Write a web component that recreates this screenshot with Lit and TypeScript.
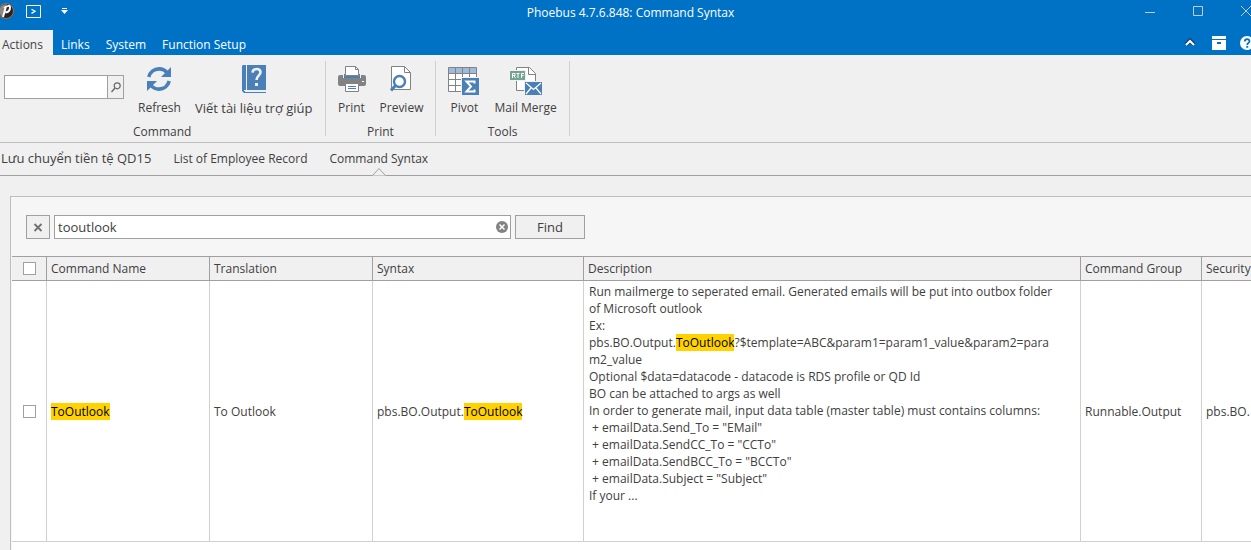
import { LitElement, html, css, svg } from "lit";
import { customElement, property, state } from "lit/decorators.js";

const icons: Record<string, unknown> = {
  refresh: svg`<svg width="24" height="24" viewBox="0 0 24 24">
    <g fill="none" stroke="#4a7fb8" stroke-width="3.6"><path d="M1.8 10C3 5 7 1.9 12 1.9c3.600 0 6.500 1.600 8.400 4.100"/><path d="M22.200 14C21 19 17 22.100 12 22.100c-3.600 0-6.500-1.600-8.400-4.100"/></g>
    <path d="M24 0v10H14zM0 24V14h10z" fill="#4a7fb8"/></svg>`,
  book: svg`<svg width="24" height="28" viewBox="0 0 24 28">
    <path d="M1 0h3v25H0V1zM5 0h19v25H5z" fill="#4a7fb8"/><path d="M0 24h2v2h22v2H2l-2-2z" fill="#4a7fb8"/><path d="M3 25h21v2H3z" fill="#f0f0f0"/>
    <path d="M10.500 7.700c.3-2.600 1.900-3.700 4.100-3.700 2.300 0 3.900 1.200 3.900 3.300 0 3.500-4 3.200-4 7.700" fill="none" stroke="#f0f0f0" stroke-width="2.600"/><path d="M13 18h3v3h-3z" fill="#f0f0f0"/></svg>`,
  print: svg`<svg width="28" height="26" viewBox="0 0 28 26">
    <path d="M0 11q0-2 2-2h3v3h18V9h3q2 0 2 2v7q0 2-2 2H2q-2 0-2-2z" fill="#828282"/><path d="M7.500 9.500v-9h10l3 3v6z" fill="#fff" stroke="#828282"/><path d="M17.500.5v3h3" fill="none" stroke="#828282"/><path d="M6 8h1v2h14V8h1v4H6z" fill="#4a7fb8"/>
    <path d="M7.500 17.500h13v8h-13z" fill="#fff" stroke="#828282"/><path d="M10 20.500h8m-8 2h8" stroke="#4a7fb8"/><path d="M24 15.500h2" stroke="#fff"/></svg>`,
  preview: svg`<svg width="22" height="26" viewBox="0 0 22 26">
    <path d="M1.500.5h13l6 6v17h-19z" fill="#fff" stroke="#828282"/><path d="M14.500.5v6h6" fill="none" stroke="#828282"/>
    <circle cx="9.500" cy="15.500" r="5.500" fill="#fff" stroke="#4a7fb8" stroke-width="2.400"/><path d="M5.500 19.500L1 24.500" stroke="#4a7fb8" stroke-width="3"/></svg>`,
  pivot: svg`<svg width="32" height="31" viewBox="0 -3 32 31">
    <path d="M.5.500h28v24H.5z" fill="#fff"/><path d="M.5.500h28v6H.5z" fill="#9dbbdc"/>
    <path d="M.5.500h28v24H.5zM.5 6.500h28M.5 12.500h28M.5 18.500h28M7.500.5v24M14.500.5v24M21.500.5v24" fill="none" stroke="#828282"/>
    <path d="M13 10h19v18H13z" fill="#f0f0f0"/><path d="M14 11h17v17H14z" fill="#4a7fb8"/><path d="M26.500 16.500v-2h-8l4.500 5-4.500 5h8v-2" fill="none" stroke="#fff" stroke-width="2"/></svg>`,
  mail: svg`<svg width="32" height="31" viewBox="0 -3 32 31">
    <path d="M6.500.500h13l6 6v17h-19z" fill="#fff" stroke="#828282"/><path d="M18.500.5v7h7" fill="none" stroke="#828282"/>
    <path d="M0 3h16v11H0z" fill="#f0f0f0"/><path d="M0 4h15v9H0z" fill="#74a492"/>
    <path d="M2.500 11V6.500H5v2H3m1 0L5.500 11M6.500 6.500h3M8 6.500V11M11.500 11V6.500h2.500M11.500 8.500h2" fill="none" stroke="#fff"/>
    <path d="M14 14h18v14H14z" fill="#f0f0f0"/><path d="M15 15h17v13H15z" fill="#4a7fb8"/><path d="M16 16l7.500 6.500L31 16M16 27l5-6M31 27l-5-6" fill="none" stroke="#fff" stroke-width="1.200"/></svg>`,
};

@customElement("ribbon-button")
class RibbonButton extends LitElement {
  @property() icon = "";
  @property() label = "";
  @property({ type: Boolean }) large = false;

  static styles = css`
    :host { display: block; }
    .button { display: flex; flex-direction: column; align-items: center; gap: 3px; border: 0; padding: 0; background: none; color: #404040; font: 12px/20px "Open Sans", sans-serif; white-space: nowrap; }
    .picture { display: flex; align-items: center; height: 32px; }
    .large { font-size: 13px; }
  `;

  render() {
    return html`<button class="button ${this.large ? "large" : ""}"><span class="picture">${icons[this.icon]}</span>${this.label}</button>`;
  }
}

@customElement("app-root")
class AppRoot extends LitElement {
  @state() query = "tooutlook";

  static styles = css`
    :host { display: flex; flex-direction: column; min-height: 100vh; overflow: hidden; background: #f0f0f0; color: #404040; font: 12px/17px "Open Sans", sans-serif; }
    *, *::before { box-sizing: border-box; }
    svg { display: block; flex: none; }
    button, input { font: inherit; color: inherit; border-radius: 0; margin: 0; }
    a { color: inherit; text-decoration: none; }
    .plain { border: 0; background: none; padding: 0; }

    .titlebar { display: grid; grid-template-columns: 1fr auto 1fr; align-items: center; height: 30px; overflow: hidden; background: #0072c6; color: #fff; }
    .quick { display: flex; align-items: center; padding-bottom: 8px; }
    .quick .logo { margin-left: -2px; }
    .quick .run { margin-left: 12px; }
    .quick .more { margin-left: 20px; }
    .title { margin: 0; padding: 0 0 5px 10px; font-size: 12px; font-weight: 400; }
    .window { display: flex; justify-content: flex-end; gap: 38px; padding-bottom: 8px; }
    .menubar { display: flex; height: 25px; background: #0072c6; color: #fff; overflow: hidden; }
    .tab { padding: 6px 8px 0; height: 25px; }
    .tab.active { background: #f0f0f0; color: #444; padding: 6px 10px 0 2px; }
    .tools { display: flex; align-items: center; gap: 14px; margin: 0 -4px 0 auto; }

    .ribbon { display: flex; height: 88px; padding: 6px 0; border-bottom: 1px solid #bebebe; }
    .group { display: flex; flex-direction: column; align-items: center; border-right: 1px solid #d0d0d0; }
    .items { display: flex; flex: none; align-items: flex-start; gap: 14px; padding: 2px 12px 0; height: 62px; }
    .first { padding-left: 4px; }
    .caption { flex: none; line-height: 17px; }
    .combo { display: flex; width: 120px; height: 24px; margin-top: 12px; border: 1px solid #a0a0a0; background: #fff; }
    .combo input { flex: 1; min-width: 0; border: 0; padding: 0 4px; outline: 0; background: #fff; }
    .combo button { display: flex; align-items: center; justify-content: center; width: 16px; border: 0; border-left: 1px solid #a0a0a0; padding: 0; background: #f0f0f0; }

    .docs { display: flex; gap: 22px; height: 33px; padding: 7px 1px 0; border-bottom: 1px solid #a0a0a0; white-space: nowrap; }
    .doc { position: relative; height: 26px; }
    .doc.big { font-size: 13px; }
    .notch { position: absolute; left: calc(50% - 7px); bottom: 0; }

    .panel { display: flex; flex-direction: column; flex: 1; margin: 20px 0 0 10px; border: 1px solid #bebebe; border-width: 1px 0 0 1px; background: #f6f6f6; }
    .search { display: flex; gap: 4px; padding: 18px 16px 17px 15px; font-size: 13px; }
    .box { display: flex; align-items: center; justify-content: center; height: 24px; border: 1px solid #a0a0a0; padding: 0; background: #f0f0f0; }
    .close { width: 24px; }
    .find { width: 70px; }
    .field { width: 457px; padding-right: 2px; background: #fff; }
    .field input { flex: 1; border: 0; padding: 0 3px; outline: 0; background: #fff; }

    .frame { flex: 1; margin-left: 1px; background: #fff; }
    .grid { width: 100%; table-layout: fixed; border-collapse: separate; border-spacing: 0; }
    .grid th { height: 25px; padding: 0 4px; border: 1px solid #a0a0a0; border-width: 1px 1px 1px 0; background: #f0f0f0; font-weight: 400; text-align: left; white-space: nowrap; overflow: hidden; }
    .grid td { height: 261px; padding: 0 4px; border: 1px solid #d0d0d0; border-width: 0 1px 1px 0; vertical-align: middle; white-space: nowrap; overflow: hidden; }
    .grid th:last-child, .grid td:last-child { border-right: 0; padding-right: 0; }
    .grid .pick { text-align: center; padding: 0; }
    .grid .text { padding: 2px 5px; vertical-align: top; white-space: pre; }
    .c-pick { width: 35px; } .c-name { width: 163px; } .c-syntax { width: 211px; } .c-group { width: 121px; } .c-security { width: 49px; }
    .c-desc { width: auto; }
    .check { appearance: none; display: block; width: 13px; height: 13px; margin: 0 auto; border: 1px solid #a0a0a0; background: #fff; }
    mark { background: #ffd200; color: #000; }
  `;

  hit(before: string, after = "") {
    return html`${before}<mark>ToOutlook</mark>${after}`;
  }

  render() {
    const before = [
      "Run mailmerge to seperated email. Generated emails will be put into outbox folder",
      "of Microsoft outlook",
      "Ex:",
      "pbs.BO.Output.",
    ].join("\n");
    const after = [
      "?$template=ABC&param1=param1_value&param2=para",
      "m2_value",
      "Optional $data=datacode - datacode is RDS profile or QD Id",
      "BO can be attached to args as well",
      "In order to generate mail, input data table (master table) must contains columns:",
      ' + emailData.Send_To = "EMail"',
      ' + emailData.SendCC_To = "CCTo"',
      ' + emailData.SendBCC_To = "BCCTo"',
      ' + emailData.Subject = "Subject"',
      "If your ...",
    ].join("\n");
    return html`
      <header class="titlebar">
        <div class="quick">
          <svg class="logo" width="16" height="22" viewBox="0 0 16 22"><circle cx="8" cy="11" r="7.500" fill="#242424" stroke="#b56a35"/><path d="M1.500 9A6.500 6.500 0 0 1 9 4.500L5 17A6.500 6.500 0 0 1 1.500 9z" fill="#888"/><path d="M5 17L8 6.500M6 8q6-4 6-.500 0 4.500-4.500 5" fill="none" stroke="#fff" stroke-width="2"/></svg>
          <button class="plain run" aria-label="Run"><svg width="15" height="13" viewBox="0 0 15 13"><path d="M.5.500h14v12H.5z" fill="none" stroke="#fff"/><path d="M5.500 4.200L9 6.300 5.500 8.400" fill="none" stroke="#fff" stroke-width="1.300"/></svg></button>
          <button class="plain more" aria-label="Customize"><svg width="7" height="6" viewBox="0 0 7 6"><path d="M1 0h5v1H1zM0 2h7L3.500 6z" fill="#fff"/></svg></button>
        </div>
        <h1 class="title">Phoebus 4.7.6.848: Command Syntax</h1>
        <div class="window">
          <button class="plain" aria-label="Minimize"><svg width="10" height="10" viewBox="0 0 10 10"><path d="M0 6.500h10" stroke="#c8c8c8"/></svg></button>
          <button class="plain" aria-label="Maximize"><svg width="10" height="10" viewBox="0 0 10 10"><path d="M.5.500h9v9h-9z" fill="none" stroke="#c8c8c8"/></svg></button>
          <button class="plain" aria-label="Close"><svg width="10" height="10" viewBox="0 0 10 10"><path d="M0 0l10 10M10 0L0 10" stroke="#c8c8c8"/></svg></button>
        </div>
      </header>
      <nav class="menubar">
        <a class="tab active" href="#">Actions</a><a class="tab" href="#">Links</a><a class="tab" href="#">System</a><a class="tab" href="#">Function Setup</a>
        <div class="tools">
          <button class="plain" aria-label="Collapse"><svg width="14" height="9" viewBox="0 0 14 9"><path d="M2 6.500l4-4 4 4" fill="none" stroke="#173d63" stroke-width="4"/><path d="M2 7L6 3l4 4" fill="none" stroke="#fff" stroke-width="2"/></svg></button>
          <button class="plain" aria-label="Layout"><svg width="14" height="14" viewBox="0 0 14 14"><path d="M0 0h14v3H0zM0 4h14v10H0z" fill="#fff"/><path d="M5 6h4v2H5z" fill="#0072c6"/></svg></button>
          <button class="plain" aria-label="Help"><svg width="15" height="14" viewBox="0 0 15 14"><circle cx="7" cy="7" r="7" fill="#fff"/><path d="M4.700 5.500C5 2.500 9.500 2.500 9.500 5.200 9.500 7 7.200 6.800 7.200 9" fill="none" stroke="#0072c6" stroke-width="1.800"/><path d="M6.300 10h1.900v1.800H6.300z" fill="#0072c6"/></svg></button>
        </div>
      </nav>
      <section class="ribbon">
        <div class="group">
          <div class="items first">
            <div class="combo"><input aria-label="Command" /><button aria-label="Search"><svg width="10" height="11" viewBox="0 0 10 11"><circle cx="6.200" cy="3.800" r="3" fill="none" stroke="#666" stroke-width="1.200"/><path d="M4 6L.5 10" stroke="#666" stroke-width="1.400"/></svg></button></div>
            <ribbon-button icon="refresh" label="Refresh"></ribbon-button>
            <ribbon-button icon="book" label="Viết tài liệu trợ giúp" large></ribbon-button>
          </div>
          <div class="caption">Command</div>
        </div>
        <div class="group">
          <div class="items"><ribbon-button icon="print" label="Print"></ribbon-button><ribbon-button icon="preview" label="Preview"></ribbon-button></div>
          <div class="caption">Print</div>
        </div>
        <div class="group">
          <div class="items"><ribbon-button icon="pivot" label="Pivot"></ribbon-button><ribbon-button icon="mail" label="Mail Merge"></ribbon-button></div>
          <div class="caption">Tools</div>
        </div>
      </section>
      <nav class="docs">
        <a class="doc big" href="#">Lưu chuyển tiền tệ QD15</a>
        <a class="doc" href="#">List of Employee Record</a>
        <a class="doc" href="#">Command Syntax<svg class="notch" width="14" height="8" viewBox="0 0 14 8"><path d="M.5 7.500l6.500-7 6.500 7" fill="#f0f0f0" stroke="#a0a0a0"/></svg></a>
      </nav>
      <main class="panel">
        <div class="search">
          <button class="box close" aria-label="Close search"><svg width="10" height="9" viewBox="0 0 10 9"><path d="M1.500 1l7 7M8.500 1l-7 7" stroke="#707070" stroke-width="1.800"/></svg></button>
          <div class="box field">
            <input aria-label="Find text" .value=${this.query} @input=${(e: Event) => (this.query = (e.target as HTMLInputElement).value)} />
            <button class="plain" aria-label="Clear" @click=${() => (this.query = "")}><svg width="12" height="12" viewBox="0 0 12 12"><circle cx="6" cy="6" r="6" fill="#828282"/><path d="M3.500 3.500l5 5m0-5l-5 5" stroke="#fff" stroke-width="1.500"/></svg></button>
          </div>
          <button class="box find">Find</button>
        </div>
        <div class="frame">
          <table class="grid">
            <colgroup><col class="c-pick" /><col class="c-name" /><col class="c-name" /><col class="c-syntax" /><col class="c-desc" /><col class="c-group" /><col class="c-security" /></colgroup>
            <thead><tr><th class="pick"><input class="check" type="checkbox" aria-label="Select all" /></th><th>Command Name</th><th>Translation</th><th>Syntax</th><th>Description</th><th>Command Group</th><th>Security</th></tr></thead>
            <tbody><tr>
              <td class="pick"><input class="check" type="checkbox" aria-label="Select ToOutlook" /></td>
              <td>${this.hit("")}</td><td>To Outlook</td><td>${this.hit("pbs.BO.Output.")}</td>
              <td class="text">${this.hit(before, after)}</td>
              <td>Runnable.Output</td><td>pbs.BO.</td>
            </tr></tbody>
          </table>
        </div>
      </main>`;
  }
}
